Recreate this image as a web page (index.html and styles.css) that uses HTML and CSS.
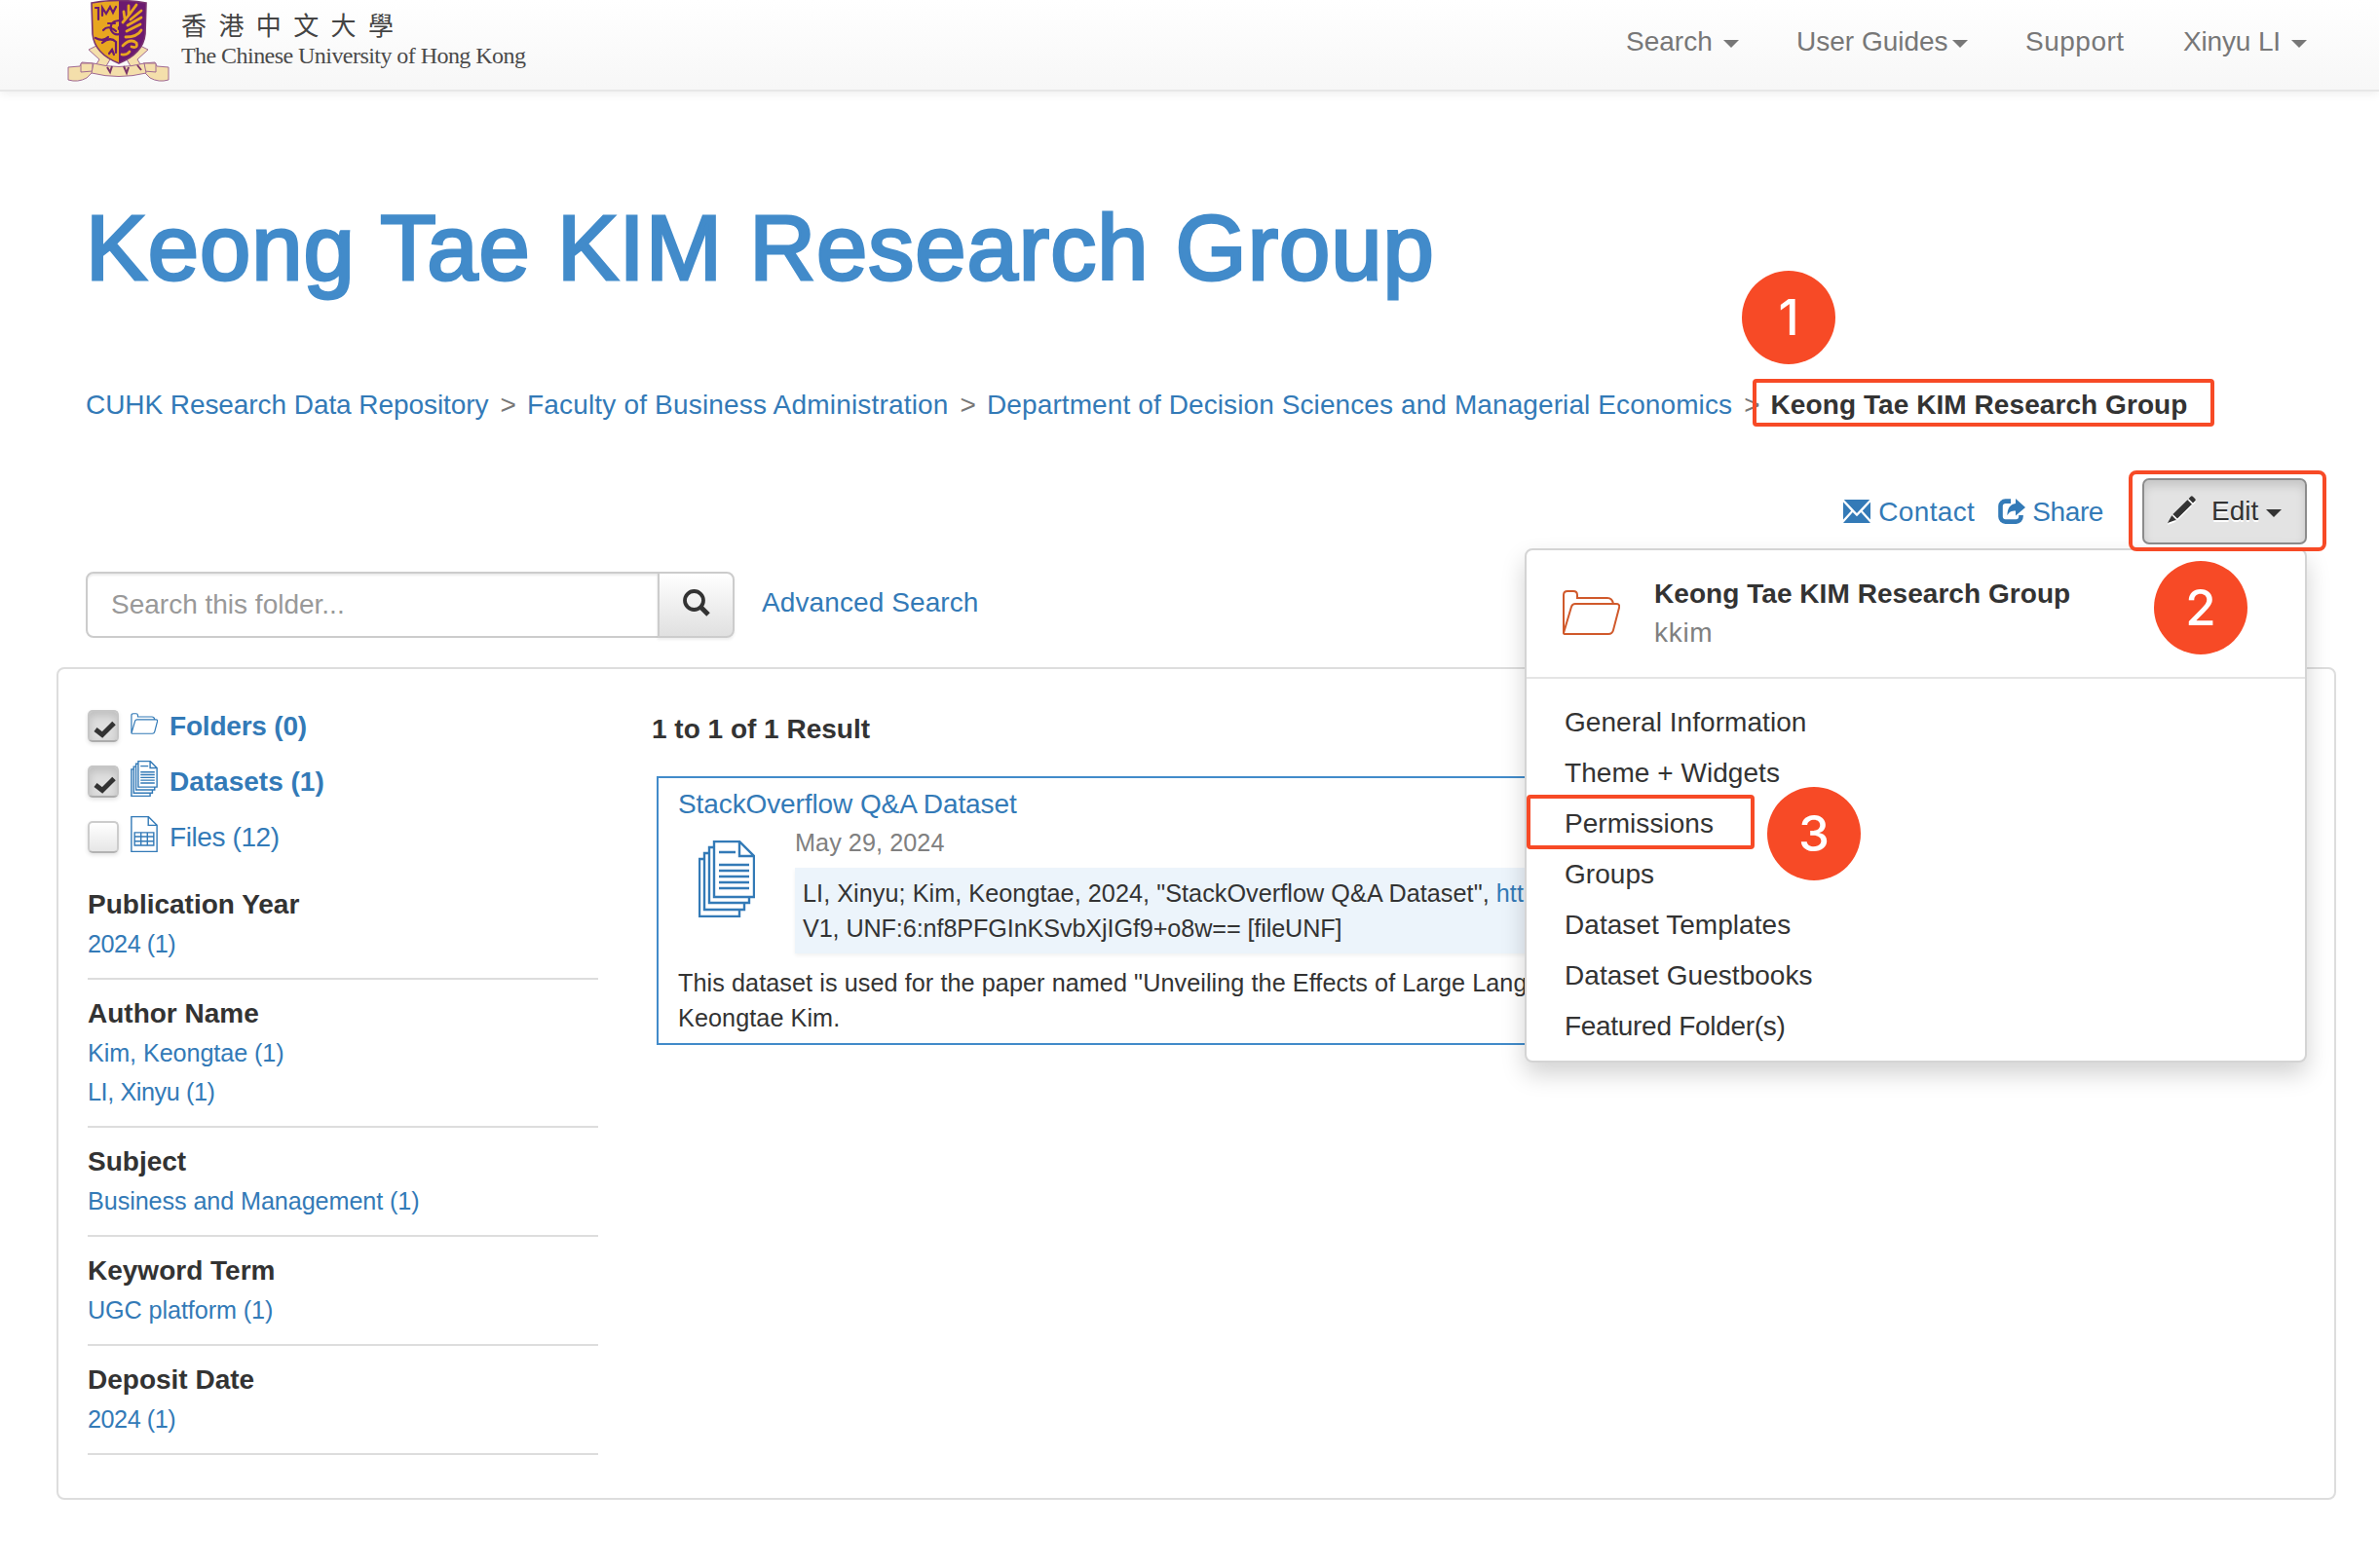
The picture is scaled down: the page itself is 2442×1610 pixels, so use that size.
FILE: index.html
```html
<!DOCTYPE html>
<html lang="en">
<head>
<meta charset="utf-8">
<title>Keong Tae KIM Research Group</title>
<link rel="stylesheet" href="styles.css">
</head>
<body>
<svg class="defs" aria-hidden="true">
  <symbol id="folder" viewBox="0 0 60 46">
    <path d="M2 44V5q0-4 4-4h6q4 0 4 4v3h31q5 0 6 6M2 44l8-27q1-3 4-3h42q4 0 3 4l-6 23q-1 4-5 4H4q-2 0-2-1z"/>
  </symbol>
  <symbol id="stack" viewBox="0 0 58 79">
    <path d="M16 1h26l15 15v42H16zM42 1v15h15M21 12h17M21 25h31M21 31h31M21 37h31M21 43h31M21 49h31M16 7h-5v57h41v-6M11 13H6v58h41v-7M6 19H1v59h41v-7"/>
  </symbol>
  <symbol id="sheet" viewBox="0 0 58 79">
    <path d="M1 1h37l19 19v58H1zM38 1v19h19M8 36h42v28H8zM8 45h42M8 55h42M22 36v28M36 36v28"/>
  </symbol>
</svg>

<div class="page">
  <header class="topbar">
    <a class="brand">
      <svg class="crest" viewBox="0 0 106 84">
        <g fill="#f4dfab" stroke="#a06a92" stroke-width="1">
          <path d="M22 51l8-4 14 14-7 12-9-4 5-8zM83 51l-8-4-14 14 7 12 9-4-5-8z"/>
          <path d="M1 69l12-1 2-4 12 1 1 7-8 8q-9 5-19 2zM104 69l-12-1-2-4-12 1-1 7 8 8q9 5 19 2z"/>
          <path d="M14 65h12v8l-12 1zM91 65H79v8l12 1z"/>
          <path d="M27 65q26 7 52 0l2 10q-28 7-56 0z"/>
        </g>
        <path d="M41 69l3 5 2-6M58 68l3 7 2-6M72 67l4 5" fill="none" stroke="#7b3569" stroke-width="2"/>
        <path d="M25 3Q39 0 53 1v64Q27 54 26 35z" fill="#e8a620"/>
        <path d="M81 3Q67 0 53 1v64q26-11 27-30z" fill="#6c1a70"/>
        <path d="M25 3q28-5 56 0l-1 32Q78 55 53 65 28 55 26 35z" fill="none" stroke="#7a3470" stroke-width="1.6"/>
        <g fill="none" stroke-linecap="round">
          <path d="M29 8h3v12M36 16V8l4 6 4-7 3 6 3-6M42 24h7M29 39q8 4 13-1M36 44q8-7 14-1v11M43 55l3-4 2 5M50 32q-8-7-13-1" stroke="#6c1a70" stroke-width="2.2"/>
          <path d="M55 21q-12 0-10 10 4 7 11 3 5-6 0-7-4 0-3 3" stroke="#6c1a70" stroke-width="2.2"/>
          <path d="M57 23q8-9 14-18M59 19l-1-7M63 15V6M65 20l11-9M62 26l14-8M61 32l14-7M60 38q12 0 16-7M57 47q8-8 14-3 2 6-5 4M56 56q5 1 8-3" stroke="#e8a620" stroke-width="2.8"/>
        </g>
      </svg>
      <span class="brand-text">
        <span class="brand-zh" lang="zh-Hant">香港中文大學</span>
        <span class="brand-en">The Chinese University of Hong Kong</span>
      </span>
    </a>
    <nav class="nav">
      <a class="nav-item search">Search<i class="caret"></i></a>
      <a class="nav-item guides">User Guides<i class="caret"></i></a>
      <a class="nav-item support">Support</a>
      <a class="nav-item user">Xinyu LI<i class="caret"></i></a>
    </nav>
  </header>

  <h1 class="title">Keong Tae KIM Research Group</h1>

  <div class="crumbs">
    <a class="crumb-root">CUHK Research Data Repository</a><span class="sep">&gt;</span>
    <a class="crumb-faculty">Faculty of Business Administration</a><span class="sep">&gt;</span>
    <a class="crumb-dept">Department of Decision Sciences and Managerial Economics</a><span class="sep">&gt;</span>
    <strong>Keong Tae KIM Research Group</strong>
  </div>

  <div class="actions">
    <a class="action contact">
      <svg viewBox="0 0 28 24" width="28" height="24" fill="currentColor"><path d="M.8 0h26.4L14 14zM0 2.6l8.2 8.8L0 20.6zM28 2.6l-8.2 8.8 8.2 9.2zM9.8 13l4.2 4.2 4.2-4.2L28 24H0z"/></svg>
      <span>Contact</span>
    </a>
    <a class="action share">
      <svg viewBox="0 0 28 26" width="28" height="26"><path d="M13 2.6H7.5a5 5 0 0 0-5 5v11a5 5 0 0 0 5 5h11a5 5 0 0 0 5-5V17" fill="none" stroke="currentColor" stroke-width="4.6"/><path d="M18 0l10 9-10 8.600V12.500c-4.500 0-6.300 1-8.600 4.700C9.600 10.500 12 5.700 18 5z" fill="currentColor"/></svg>
      <span>Share</span>
    </a>
    <div class="edit">
      <button class="edit-btn">
        <svg viewBox="0 0 29 28" width="29" height="28" fill="currentColor"><path d="M21.600 3l2.200-2.300q1-.9 2 0l2.500 2.500q.9 1 0 2L26 7.500zM20.400 4.200l4.500 4.500L10 23.500 5.400 19zM4.300 20.200L8.800 24.700 0 28z"/></svg>
        <span>Edit</span><i class="caret"></i>
      </button>
      <div class="menu">
        <div class="menu-head">
          <svg class="line-icon menu-folder"><use href="#folder"/></svg>
          <div class="menu-owner"><strong>Keong Tae KIM Research Group</strong><span>kkim</span></div>
        </div>
        <ul class="menu-list">
          <li>General Information</li>
          <li>Theme + Widgets</li>
          <li>Permissions</li>
          <li>Groups</li>
          <li>Dataset Templates</li>
          <li>Dataset Guestbooks</li>
          <li class="featured">Featured Folder(s)</li>
        </ul>
      </div>
    </div>
  </div>

  <div class="searchbar">
    <div class="search-input">Search this folder...</div>
    <button class="search-btn">
      <svg viewBox="0 0 28 28" width="28" height="28" fill="none" stroke="currentColor"><circle cx="11.500" cy="11.500" r="9.500" stroke-width="3.800"/><path d="M18.500 18.500l7.500 7.500" stroke-width="5"/></svg>
    </button>
    <a class="advanced">Advanced Search</a>
    <span class="sort-btn"></span>
  </div>

  <main class="panel">
    <aside class="facets">
      <div class="type on"><span class="check"><svg viewBox="0 0 32 32"><path d="M8 20l7 5.500L27 13.500"/></svg></span><svg class="line-icon i-folder"><use href="#folder"/></svg><b class="folders">Folders (0)</b></div>
      <div class="type on"><span class="check"><svg viewBox="0 0 32 32"><path d="M8 20l7 5.500L27 13.500"/></svg></span><svg class="line-icon i-doc"><use href="#stack"/></svg><b>Datasets (1)</b></div>
      <div class="type"><span class="check"></span><svg class="line-icon i-doc"><use href="#sheet"/></svg><span class="files">Files (12)</span></div>

      <section class="facet first"><h2>Publication Year</h2><a class="year">2024 (1)</a></section>
      <section class="facet"><h2>Author Name</h2><a>Kim, Keongtae (1)</a><a class="li">LI, Xinyu (1)</a></section>
      <section class="facet"><h2>Subject</h2><a>Business and Management (1)</a></section>
      <section class="facet"><h2>Keyword Term</h2><a>UGC platform (1)</a></section>
      <section class="facet"><h2>Deposit Date</h2><a class="year">2024 (1)</a></section>
    </aside>

    <section class="results">
      <h2 class="count">1 to 1 of 1 Result</h2>
      <article class="card">
        <a class="card-title">StackOverflow Q&amp;A Dataset</a>
        <div class="card-body">
          <svg class="line-icon card-icon"><use href="#stack"/></svg>
          <div class="card-main">
            <div class="date">May 29, 2024</div>
            <div class="cite">LI, Xinyu; Kim, Keongtae, 2024, "StackOverflow Q&amp;A Dataset", <a>https</a><br><span class="unf">V1, UNF:6:nf8PFGInKSvbXjIGf9+o8w== [fileUNF]</span></div>
          </div>
        </div>
        <p class="desc">This dataset is used for the paper named "Unveiling the Effects of Large Lang<br>Keongtae Kim.</p>
      </article>
    </section>
  </main>

  <div class="mark mark-crumb"></div>
  <div class="mark mark-edit"></div>
  <div class="mark mark-perm"></div>
  <div class="step step-1">1</div>
  <div class="step step-2">2</div>
  <div class="step step-3">3</div>
</div>
</body>
</html>
```
FILE: styles.css
```css
* { box-sizing: border-box; }
body {
  margin: 0;
  background: #fff;
  color: #333;
  font: 28px/40px "Liberation Sans", Arial, sans-serif;
}
h1, h2, p, ul { margin: 0; padding: 0; }
a { color: #337ab7; text-decoration: none; }
button { font: inherit; color: inherit; padding: 0; }
svg { display: block; flex: none; }
.defs { position: absolute; width: 0; height: 0; }
.page { position: relative; width: 2442px; height: 1610px; overflow: hidden; }

.caret {
  flex: none;
  width: 0;
  height: 0;
  border: 8px solid transparent;
  border-top-color: currentColor;
  border-bottom: 0;
}
.line-icon { fill: none; stroke: #337ab7; }

/* Header */
.topbar {
  display: flex;
  justify-content: space-between;
  height: 94px;
  padding: 0 74px 0 69px;
  border-bottom: 2px solid #e7e7e7;
  background: linear-gradient(#fff, #f7f7f7);
  box-shadow: 0 2px 10px rgba(0, 0, 0, .075);
}
.brand { display: flex; gap: 11px; }
.crest { width: 106px; height: 84px; }
.brand-text { display: flex; flex-direction: column; padding-top: 10px; color: #444; white-space: nowrap; }
.brand-zh { font: 26px/30px "Noto Sans CJK TC", sans-serif; letter-spacing: 12.4px; }
.brand-en { font: 24px/34px "Liberation Serif", serif; letter-spacing: -.55px; color: #4a4a4a; }
.nav { display: flex; gap: 59px; padding-top: 23px; }
.nav-item { display: flex; justify-content: space-between; align-items: center; height: 40px; color: #777; white-space: nowrap; }
.nav-item .caret { margin-top: 4px; }
.search { width: 116px; }
.guides { width: 176px; }
.support { width: 103px; letter-spacing: .5px; }
.user { width: 127px; letter-spacing: -.15px; }

/* Heading and breadcrumbs */
.title {
  margin: 109px 0 0 88px;
  color: #428bca;
  font-size: 94px;
  font-weight: 400;
  line-height: 104px;
  letter-spacing: 1px;
  -webkit-text-stroke: 3px #428bca;
  white-space: nowrap;
}
.crumbs { display: flex; height: 40px; margin: 89px 0 0 88px; white-space: nowrap; letter-spacing: .075px; }
.sep { margin: 0 11px 0 12px; color: #777; }
.crumb-root { letter-spacing: -.07px; }
.crumb-faculty { letter-spacing: .185px; }
.crumb-dept { letter-spacing: .1px; }

/* Actions */
.actions { display: flex; justify-content: flex-end; align-items: center; height: 68px; margin: 55px 74px 0 0; }
.action { display: flex; align-items: center; height: 40px; }
.action span { padding-top: 1px; }
.contact { gap: 8px; margin-right: 24px; letter-spacing: .38px; }
.share { gap: 7px; margin-right: 40px; letter-spacing: -.4px; }
.edit { position: relative; }
.edit-btn {
  display: flex;
  align-items: center;
  width: 169px;
  height: 68px;
  padding-left: 24px;
  border: 2px solid #8c8c8c;
  border-radius: 7px;
  background: #e3e3e3;
  box-shadow: inset 0 6px 10px rgba(0, 0, 0, .125);
  text-shadow: 0 2px 0 #fff;
}
.edit-btn svg { margin-bottom: 5px; filter: drop-shadow(0 2px 0 #fff); }
.edit-btn span { margin: 0 8px 0 16px; }
.edit-btn .caret { margin-top: 4px; }

.menu {
  position: absolute;
  z-index: 2;
  top: 72px;
  right: 0;
  width: 803px;
  height: 528px;
  border: 2px solid #d4d4d4;
  border-radius: 8px;
  background: #fff;
  box-shadow: 0 12px 24px rgba(0, 0, 0, .175);
}
.menu-head { display: flex; gap: 35px; height: 132px; padding: 25px 36px 0; border-bottom: 2px solid #e5e5e5; }
.menu-folder { width: 60px; height: 48px; margin-top: 15px; stroke: #d0592b; stroke-width: 2; }
.menu-owner { display: flex; flex-direction: column; }
.menu-owner strong { letter-spacing: .05px; }
.menu-owner span { color: #808080; letter-spacing: .7px; }
.menu-list { padding: 19px 39px 0; list-style: none; line-height: 52px; letter-spacing: .05px; }
.featured { letter-spacing: -.3px; }

/* Search */
.searchbar { display: flex; height: 68px; margin: 28px 74px 0 88px; }
.search-input {
  width: 589px;
  padding: 12px 24px;
  border: 2px solid #ccc;
  border-radius: 8px 0 0 8px;
  box-shadow: inset 0 2px 2px rgba(0, 0, 0, .075);
  color: #999;
}
.search-btn {
  display: grid;
  place-items: center;
  width: 79px;
  margin-left: -2px;
  border: 2px solid #ccc;
  border-radius: 0 8px 8px 0;
  background: linear-gradient(#fff, #e0e0e0);
  box-shadow: 0 2px 3px rgba(0, 0, 0, .075);
}
.search-btn svg { margin-bottom: 4px; }
.advanced { margin: 12px 0 0 28px; letter-spacing: .1px; }
.sort-btn { width: 100px; margin-left: auto; border: 2px solid #999; border-radius: 8px; }

/* Panel */
.panel {
  display: flex;
  gap: 55px;
  width: 2340px;
  height: 855px;
  margin: 30px 0 0 58px;
  padding: 30px;
  border: 2px solid #ddd;
  border-radius: 8px;
}
.facets { width: 524px; flex: none; }
.type { display: flex; align-items: center; gap: 12px; height: 57px; color: #337ab7; }
.type b, .files { padding-top: 1px; }
.check {
  width: 32px;
  height: 33px;
  border: 2px solid #ccc;
  border-bottom-color: #b3b3b3;
  border-radius: 5px;
  background: linear-gradient(#fff, #e6e6e6);
  box-shadow: 0 2px 4px rgba(0, 0, 0, .12);
}
.on .check { background: #dedede; border-color: #c6c6c6 #c6c6c6 #acacac; box-shadow: inset 0 4px 8px rgba(0, 0, 0, .14), 0 2px 4px rgba(0, 0, 0, .12); }
.check svg { width: 32px; height: 32px; margin: -2px; fill: none; stroke: #333; stroke-width: 5; }
.i-folder { width: 28px; height: 22px; margin-bottom: 6px; stroke-width: 2.600; }
.i-doc { width: 28px; height: 37px; margin-bottom: 6px; stroke-width: 3; }
.folders { letter-spacing: -.2px; }
.files { letter-spacing: -.4px; }
.facet { padding-bottom: 15px; margin-bottom: 15px; border-bottom: 2px solid #ddd; }
.facet.first { margin-top: 21px; }
.facet h2 { height: 40px; font-size: 28px; line-height: 40px; }
.facet a { display: block; height: 40px; font-size: 25.2px; letter-spacing: -.09px; }
.facet .year { letter-spacing: -.45px; }
.facet .li { letter-spacing: -.4px; }

.results { padding-top: 12px; }
.count { font-size: 28px; line-height: 40px; white-space: nowrap; }
.card {
  width: 1660px;
  height: 276px;
  margin: 28px 0 0 5px;
  padding: 7px 0 0 20px;
  border: 2px solid #428bca;
  font-size: 25.2px;
  line-height: 36px;
}
.card-title { display: block; height: 41px; font-size: 28px; line-height: 40px; letter-spacing: -.1px; }
.card-body { display: flex; height: 132px; }
.card-icon { width: 58px; height: 79px; margin: 16px 41px 0 21px; stroke-width: 2.400; }
.card-main { flex: 1; }
.date { height: 44px; color: #808080; letter-spacing: .07px; }
.cite { height: 88px; padding: 8px; background: #ecf4fb; box-shadow: 0 2px 4px rgba(0, 0, 0, .06); letter-spacing: .06px; }
.unf { letter-spacing: -.1px; }
.desc { padding-top: 12px; letter-spacing: .08px; }

/* Step annotations */
.mark { position: absolute; z-index: 3; border: 4px solid #f74a26; border-radius: 4px; }
.mark-crumb { left: 1799px; top: 389px; width: 474px; height: 49px; }
.mark-edit { left: 2185px; top: 483px; width: 203px; height: 83px; border-radius: 8px; }
.mark-perm { left: 1567px; top: 816px; width: 234px; height: 56px; }
.step {
  position: absolute;
  z-index: 4;
  width: 96px;
  height: 96px;
  border-radius: 50%;
  background: #f74a26;
  color: #fff;
  font: 500 51px/95px Inter, sans-serif;
  text-align: center;
}
.step-1 { left: 1788px; top: 278px; }
.step-2 { left: 2211px; top: 576px; }
.step-3 { left: 1814px; top: 808px; }
```
